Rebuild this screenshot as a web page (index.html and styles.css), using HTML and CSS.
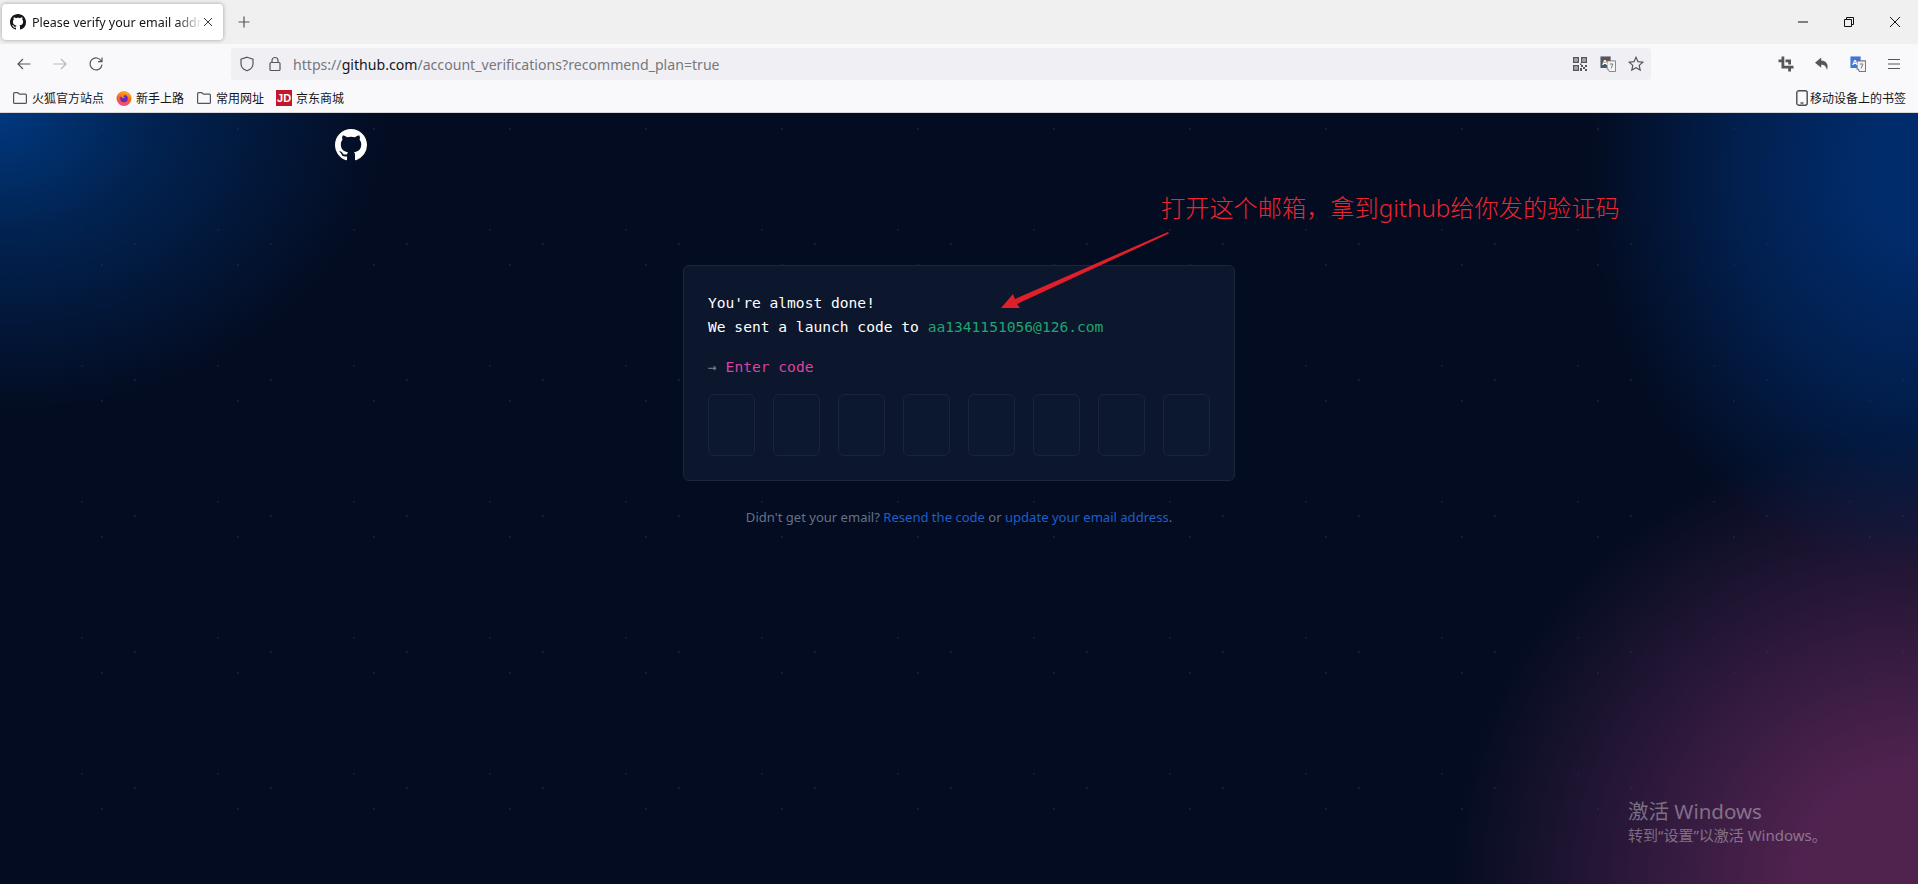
FILE: index.html
```html
<!DOCTYPE html>
<html lang="en">
<head>
  <meta charset="UTF-8">
  <meta name="viewport" content="width=device-width, initial-scale=1.0">
  <title>Please verify your email address</title>
  <link rel="stylesheet" href="styles.css">
</head>
<body>
  <svg class="sprites" width="0" height="0">
    <defs>
      <linearGradient id="fox" x1="0.7" y1="0" x2="0.4" y2="1">
        <stop offset="0" stop-color="#ffb321"/>
        <stop offset="0.55" stop-color="#f4631e"/>
        <stop offset="1" stop-color="#f0479a"/>
      </linearGradient>
    </defs>
    <symbol id="mark" viewBox="0 0 16 16">
      <path fill="currentColor" d="M8 0C3.58 0 0 3.58 0 8c0 3.54 2.29 6.53 5.47 7.59.4.07.55-.17.55-.38 0-.19-.01-.82-.01-1.49-2.01.37-2.53-.49-2.69-.94-.09-.23-.48-.94-.82-1.13-.28-.15-.68-.52-.01-.53.63-.01 1.08.58 1.23.82.72 1.21 1.87.87 2.33.66.07-.52.28-.87.51-1.07-1.78-.2-3.64-.89-3.64-3.95 0-.87.31-1.59.82-2.15-.08-.2-.36-1.02.08-2.12 0 0 .67-.21 2.2.82.64-.18 1.32-.27 2-.27.68 0 1.36.09 2 .27 1.53-1.04 2.2-.82 2.2-.82.44 1.1.16 1.92.08 2.12.51.56.82 1.27.82 2.15 0 3.07-1.87 3.75-3.65 3.95.29.25.54.73.54 1.48 0 1.07-.01 1.93-.01 2.2 0 .21.15.46.55.38A8.013 8.013 0 0016 8c0-4.42-3.58-8-8-8z"/>
    </symbol>
    <symbol id="folder" viewBox="0 0 16 16">
      <path fill="none" stroke="#55555c" stroke-width="1.2" d="M1.6 3.6c0-.6.4-1 1-1h3.2l1.5 1.6h6.1c.6 0 1 .4 1 1v7.2c0 .6-.4 1-1 1H2.6c-.6 0-1-.4-1-1z"/>
    </symbol>
    <symbol id="translate" viewBox="0 0 18 18">
      <path fill="currentColor" d="M.5.5h11.500v13H.5z"/>
      <path fill="#f4f4f6" stroke="#77777c" d="M8 5.500h9.500v12H10.500L9.500 15H8z"/>
      <path fill="none" stroke="#77777c" stroke-width="1.100" d="M11 9h3.500L12.500 14"/>
      <text x="2.200" y="10.500" class="translate-a">A</text>
    </symbol>
  </svg>

  <div class="tabstrip">
    <div class="tab">
      <svg class="tab-icon"><use href="#mark"/></svg>
      <span class="tab-title">Please verify your email address</span>
      <svg class="tab-close" viewBox="0 0 10 10"><path d="M1 1l8 8M9 1l-8 8"/></svg>
    </div>
    <svg class="new-tab" viewBox="0 0 12 12"><path d="M6 .5v11M.5 6h11"/></svg>
    <div class="window-controls">
      <span class="window-btn"><svg viewBox="0 0 12 12"><path d="M1 6h10"/></svg></span>
      <span class="window-btn"><svg viewBox="0 0 12 12"><path d="M1.500 3.500h7v7h-7zM3.500 3.500v-2h7v7h-2"/></svg></span>
      <span class="window-btn"><svg viewBox="0 0 12 12"><path d="M1 1l10 10M11 1L1 11"/></svg></span>
    </div>
  </div>

  <div class="navbar">
    <div class="nav-btn"><svg viewBox="0 0 16 16"><path d="M14.500 8H2M7 3L2 8l5 5"/></svg></div>
    <div class="nav-btn nav-off"><svg viewBox="0 0 16 16"><path d="M1.500 8H14M9 3l5 5-5 5"/></svg></div>
    <div class="nav-btn"><svg viewBox="0 0 16 16"><path d="M13.400 5.200A6 6 0 1 0 14 8.600M14 1.600v4h-4"/></svg></div>
    <div class="urlbar">
      <svg class="url-icon" viewBox="0 0 16 16"><path d="M8 1.200l6 1.900v4.600c0 3.400-2.400 5.800-6 7.100-3.600-1.300-6-3.700-6-7.100V3.100z"/></svg>
      <svg class="url-icon" viewBox="0 0 16 16"><path d="M3 7.500c0-.6.4-1 1-1h8c.6 0 1 .4 1 1v6c0 .6-.4 1-1 1H4c-.6 0-1-.4-1-1zM5 6.500V4.500a3 3 0 0 1 6 0v2"/></svg>
      <span class="url-text">https://<b>github.com</b>/account_verifications?recommend_plan=true</span>
      <div class="url-actions">
        <svg class="qr" viewBox="0 0 14 14"><path d="M0 0h6v6H0zM1.500 1.500v3h3v-3zM8 0h6v6H8zM9.500 1.500v3h3v-3zM0 8h6v6H0zM1.500 9.500v3h3v-3zM2.300 2.300h1.400v1.400H2.300zM10.300 2.300h1.400v1.400h-1.400zM2.300 10.300h1.400v1.400H2.300zM7 6.500h1.500V8H7zM8 8h2v2H8zM10 10h2v2h-2zM12 8h2v2h-2zM7 11h2v3H7zM12 12h2v2h-2z"/></svg>
        <svg class="translate translate-grey"><use href="#translate"/></svg>
        <svg class="url-icon star" viewBox="0 0 16 16"><path d="M8 1.300l2 4.400 4.800.5-3.600 3.200 1 4.700L8 11.700l-4.200 2.400 1-4.700L1.200 6.200 6 5.700z"/></svg>
      </div>
    </div>
    <div class="toolbar">
      <div class="nav-btn"><svg class="solid" viewBox="0 0 16 16"><path d="M3.500.5h2.800v9.200H15.500v2.800H13v3h-2.800v-3H3.500V6.300H.5V3.500h3zM7.500 3.500h5.500v5H10.200V6.300H7.500z"/></svg></div>
      <div class="nav-btn"><svg class="solid" viewBox="0 0 16 16"><path d="M7.200 1.500L1 6.700l6.200 5.100V8.700c3 0 4.800 1 5.800 5.300 2-5.500-1-9.400-5.800-9.500z"/></svg></div>
      <div class="nav-btn"><svg class="translate translate-blue"><use href="#translate"/></svg></div>
      <div class="nav-btn"><svg viewBox="0 0 16 16"><path d="M2 3.500h12M2 8h12M2 12.500h12"/></svg></div>
    </div>
  </div>

  <div class="bookmarks">
    <a class="bookmark"><svg class="bm-icon"><use href="#folder"/></svg>火狐官方站点</a>
    <a class="bookmark">
      <svg class="bm-icon" viewBox="0 0 16 16">
        <circle cx="8" cy="8.500" r="7.500" fill="url(#fox)"/>
        <circle cx="8" cy="8.500" r="3.800" fill="#6b2bb0"/>
        <path fill="#f7941e" d="M5 6c1-1.700 3.500-2 5-.8-1.500-.2-2.500.3-2.800 1.300 1 .1 1.500.6 1.300 1.300-1 .4-2.200.1-2.700-.6z"/>
      </svg>新手上路</a>
    <a class="bookmark"><svg class="bm-icon"><use href="#folder"/></svg>常用网址</a>
    <a class="bookmark"><span class="jd">JD</span>京东商城</a>
    <a class="bookmark mobile">
      <svg class="mobile-icon" viewBox="0 0 12 16"><rect x=".8" y=".8" width="10.400" height="14.400" rx="2"/><path d="M4.500 13h3"/></svg>移动设备上的书签</a>
  </div>

  <main class="page">
    <header class="page-header">
      <svg class="logo"><use href="#mark"/></svg>
    </header>

    <section class="card">
      <p class="line">You're almost done!</p>
      <p class="line">We sent a launch code to <span class="email">aa1341151056@126.com</span></p>
      <p class="line prompt"><span class="prompt-arrow">→</span> <span class="prompt-label">Enter code</span></p>
      <div class="code-inputs">
        <input class="code-input" type="text" maxlength="1">
        <input class="code-input" type="text" maxlength="1">
        <input class="code-input" type="text" maxlength="1">
        <input class="code-input" type="text" maxlength="1">
        <input class="code-input" type="text" maxlength="1">
        <input class="code-input" type="text" maxlength="1">
        <input class="code-input" type="text" maxlength="1">
        <input class="code-input" type="text" maxlength="1">
      </div>
    </section>

    <p class="help">Didn't get your email? <a>Resend the code</a> or <a>update your email address</a>.</p>

    <!-- red note drawn on top of the screenshot -->
    <div class="note">打开这个邮箱，拿到github给你发的验证码</div>
    <svg class="note-arrow" viewBox="0 0 172 84"><path d="M168 4L169 5.500 17 76 20 80 1 80 13 66 15 71z"/></svg>

    <div class="activate">
      <div class="activate-title">激活 Windows</div>
      <div class="activate-sub">转到“设置”以激活 Windows。</div>
    </div>
  </main>
</body>
</html>
```

FILE: styles.css
```css
* {
  box-sizing: border-box;
}

html, body {
  height: 100%;
}

body {
  margin: 0;
  overflow: hidden;
  display: flex;
  flex-direction: column;
  font-family: "Noto Sans", "Noto Sans CJK SC", sans-serif;
  background: #030c21;
}

.sprites {
  position: absolute;
}

.translate-a {
  font: bold 9px "Liberation Sans", sans-serif;
  fill: #fff;
}

/* tab strip */
.tabstrip {
  display: flex;
  align-items: flex-start;
  height: 44px;
  flex-shrink: 0;
  padding: 4px 0 0 2px;
  background: #f0f0f0;
}

.tab {
  display: flex;
  align-items: center;
  width: 221px;
  height: 36px;
  padding: 0 10px 0 8px;
  background: #fff;
  border-radius: 4px;
  box-shadow: 0 0 4px rgba(0, 0, 0, 0.35);
  color: #15141a;
}

.tab-icon {
  width: 16px;
  height: 16px;
  flex-shrink: 0;
  margin-right: 6px;
}

.tab-title {
  flex: 1;
  overflow: hidden;
  white-space: nowrap;
  font-size: 12.5px;
  -webkit-mask-image: linear-gradient(to right, #000 85%, transparent);
  mask-image: linear-gradient(to right, #000 85%, transparent);
}

.tab-close {
  width: 10px;
  height: 10px;
  margin-left: 1px;
  fill: none;
  stroke: #333;
  stroke-width: 1;
}

.new-tab {
  width: 12px;
  height: 12px;
  margin: 12px 0 0 15px;
  fill: none;
  stroke: #55555c;
  stroke-width: 1.2;
}

.window-controls {
  display: flex;
  margin-left: auto;
  margin-top: -4px;
}

.window-btn {
  display: flex;
  align-items: center;
  justify-content: center;
  width: 46px;
  height: 44px;
}

.window-btn svg {
  width: 12px;
  height: 12px;
  fill: none;
  stroke: #111;
  stroke-width: 1;
}

/* address bar */
.navbar {
  display: flex;
  align-items: center;
  height: 40px;
  flex-shrink: 0;
  padding: 0 6px;
  background: #f9f9fb;
}

.nav-btn {
  display: flex;
  align-items: center;
  justify-content: center;
  width: 36px;
  height: 32px;
}

.nav-btn svg {
  width: 16px;
  height: 16px;
  fill: none;
  stroke: #55555c;
  stroke-width: 1.2;
}

.nav-btn svg.solid {
  fill: #55555c;
  stroke: none;
}

.nav-off svg {
  stroke: #b9b9bd;
}

.urlbar {
  display: flex;
  align-items: center;
  gap: 12px;
  width: 1420px;
  height: 32px;
  margin-left: 117px;
  padding: 0 7px 0 8px;
  background: #f0f0f4;
  border-radius: 4px;
}

.url-icon {
  width: 16px;
  height: 16px;
  flex-shrink: 0;
  fill: none;
  stroke: #55555c;
  stroke-width: 1.2;
}

.url-text {
  margin-left: -2px;
  font-size: 14.12px;
  color: #77777c;
  white-space: nowrap;
}

.url-text b {
  font-weight: 400;
  color: #15141a;
}

.url-actions {
  display: flex;
  align-items: center;
  gap: 12px;
  margin-left: auto;
}

.qr {
  width: 14px;
  height: 14px;
  fill: #55555c;
  fill-rule: evenodd;
  margin-right: 1px;
}

.translate {
  width: 16px;
  height: 16px;
}

.translate-grey {
  color: #55555c;
}

.nav-btn svg.translate-blue {
  color: #3f78d8;
  stroke: none;
}

.toolbar {
  display: flex;
  margin-left: auto;
}

/* bookmarks */
.bookmarks {
  display: flex;
  align-items: center;
  gap: 12px;
  height: 29px;
  flex-shrink: 0;
  padding: 0 12px;
  background: #f9f9fb;
  border-bottom: 1px solid #d8d8dc;
  font-size: 12px;
  color: #15141a;
}

.bookmark {
  display: flex;
  align-items: center;
  gap: 4px;
  white-space: nowrap;
}

.bm-icon {
  width: 16px;
  height: 16px;
}

.jd {
  display: flex;
  align-items: center;
  justify-content: center;
  width: 16px;
  height: 16px;
  background: #c3162d;
  color: #fff;
  font: bold 11px "Liberation Sans", sans-serif;
}

.mobile {
  margin-left: auto;
  gap: 2px;
}

.mobile-icon {
  width: 12px;
  height: 16px;
  fill: none;
  stroke: #4a4a50;
  stroke-width: 1.4;
}

/* page */
.page {
  position: relative;
  flex: 1;
  overflow: hidden;
  background-color: #030c21;
  background-image:
    radial-gradient(ellipse 390px 300px at 0 0, #00387e, rgba(0, 53, 120, 0.55) 40%, rgba(0, 53, 120, 0)),
    radial-gradient(ellipse 330px 400px at 100% 60px, #012c6c 15%, rgba(1, 44, 108, 0.6) 55%, rgba(1, 44, 108, 0)),
    radial-gradient(ellipse 470px 450px at 100% 100%, #50234f 25%, rgba(80, 35, 79, 0.62) 55%, rgba(80, 35, 79, 0)),
    radial-gradient(circle, rgba(255, 255, 255, 0.07) 1px, transparent 1.5px),
    radial-gradient(circle, rgba(255, 255, 255, 0.07) 1px, transparent 1.5px),
    radial-gradient(circle, rgba(255, 255, 255, 0.05) 1px, transparent 1.5px);
  background-size: auto, auto, auto, 136px 136px, 136px 136px, 136px 136px;
  background-position: 0 0, 0 0, 0 0, 67px 63px, 34px -52px, 14px 49px;
  color: #fff;
}

.page-header {
  width: 1248px;
  height: 152px;
  margin: 0 auto;
  padding-top: 16px;
}

.logo {
  display: block;
  width: 32px;
  height: 32px;
  color: #fff;
}

.card {
  width: 552px;
  height: 216px;
  margin: 0 auto;
  padding: 25px 24px 24px;
  background: #0c162d;
  border: 1px solid #1c2639;
  border-radius: 6px;
  font-family: "DejaVu Sans Mono", monospace;
  font-size: 14.6px;
  line-height: 24px;
}

.line {
  margin: 0;
  white-space: pre;
}

.email {
  color: #1fa56d;
}

.prompt {
  margin-top: 16px;
}

.prompt-arrow {
  color: #7d8590;
}

.prompt-label {
  color: #d9459f;
}

.code-inputs {
  display: flex;
  justify-content: space-between;
  margin-top: 15px;
}

.code-input {
  width: 47px;
  height: 62px;
  background: #0c1730;
  border: 1px solid #1b2539;
  border-radius: 6px;
}

.help {
  margin: 26px 0 0;
  font-size: 13.05px;
  line-height: 21px;
  text-align: center;
  color: #66728a;
}

.help a {
  color: #1f5fc9;
}

.note {
  position: absolute;
  left: 1161px;
  top: 79px;
  font-size: 24.2px;
  font-weight: 300;
  line-height: 32px;
  white-space: nowrap;
  color: #ee2430;
}

.note-arrow {
  position: absolute;
  left: 1000px;
  top: 115px;
  width: 172px;
  height: 84px;
  fill: #e01f2a;
}

.activate {
  position: absolute;
  left: 1628px;
  top: 685px;
  color: rgba(255, 255, 255, 0.38);
  white-space: nowrap;
}

.activate-title {
  font-size: 20.5px;
  line-height: 27px;
}

.activate-sub {
  font-size: 15px;
  line-height: 20px;
}
```
